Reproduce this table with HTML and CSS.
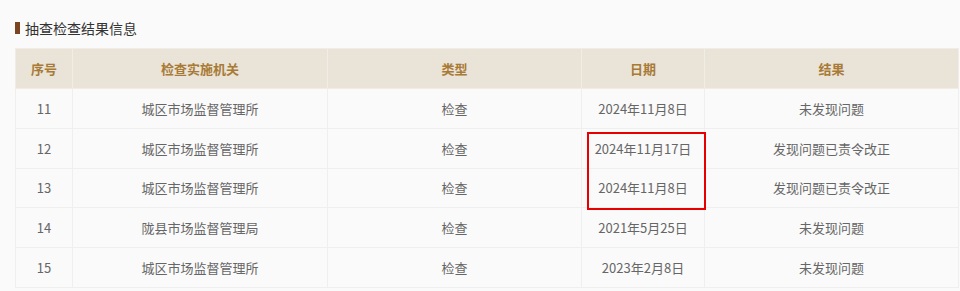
FILE: index.html
```html
<!DOCTYPE html>
<html lang="zh-CN">
<head>
<meta charset="utf-8">
<link rel="stylesheet" href="styles.css">
</head>
<body>
<div class="panel">
  <h2 class="title">抽查检查结果信息</h2>
  <table class="result">
    <colgroup>
      <col class="c1"><col class="c2"><col class="c3"><col class="c4"><col class="c5">
    </colgroup>
    <thead>
      <tr><th>序号</th><th>检查实施机关</th><th>类型</th><th>日期</th><th>结果</th></tr>
    </thead>
    <tbody>
      <tr><td>11</td><td>城区市场监督管理所</td><td>检查</td><td>2024年11月8日</td><td>未发现问题</td></tr>
      <tr><td>12</td><td>城区市场监督管理所</td><td>检查</td><td class="anchor">2024年11月17日<span class="highlight"></span></td><td>发现问题已责令改正</td></tr>
      <tr><td>13</td><td>城区市场监督管理所</td><td>检查</td><td>2024年11月8日</td><td>发现问题已责令改正</td></tr>
      <tr><td>14</td><td>陇县市场监督管理局</td><td>检查</td><td>2021年5月25日</td><td>未发现问题</td></tr>
      <tr><td>15</td><td>城区市场监督管理所</td><td>检查</td><td>2023年2月8日</td><td>未发现问题</td></tr>
    </tbody>
  </table>
</div>
</body>
</html>
```

FILE: styles.css
```css
html, body {
  margin: 0;
  padding: 0;
  background: #fafafa;
}
body {
  font-family: "Noto Sans CJK SC", "Open Sans", sans-serif;
  color: #666;
}
.panel {
  padding: 18px 3px 0 15px;
}
.title {
  margin: 0 0 10px 0;
  font-size: 14px;
  font-weight: normal;
  color: #333;
  line-height: 20px;
  height: 20px;
  display: flex;
  align-items: center;
  gap: 5px;
}
.title::before {
  content: "";
  display: block;
  width: 5px;
  height: 12px;
  background: #7a4520;
}
.result {
  width: 943px;
  border-collapse: collapse;
  table-layout: fixed;
  border: 1px solid #eeeeee;
}
.c1 { width: 57px; }
.c2 { width: 255px; }
.c3 { width: 254px; }
.c4 { width: 123px; }
.c5 { width: 254px; }
.result th {
  height: 39px;
  padding: 0;
  background: #e9e3d8;
  color: #a87a35;
  font-size: 13px;
  font-weight: bold;
  border: 1px solid #f1ede6;
  text-align: center;
}
.result td {
  height: 38.8px;
  padding: 0;
  font-size: 13px;
  color: #666;
  text-align: center;
  border: 1px solid #efefef;
  background: #fafafa;
}
.result td.anchor {
  position: relative;
}
.highlight {
  position: absolute;
  left: 5px;
  top: 3px;
  width: 115px;
  height: 74px;
  border: 2px solid #e60000;
  pointer-events: none;
}
```
